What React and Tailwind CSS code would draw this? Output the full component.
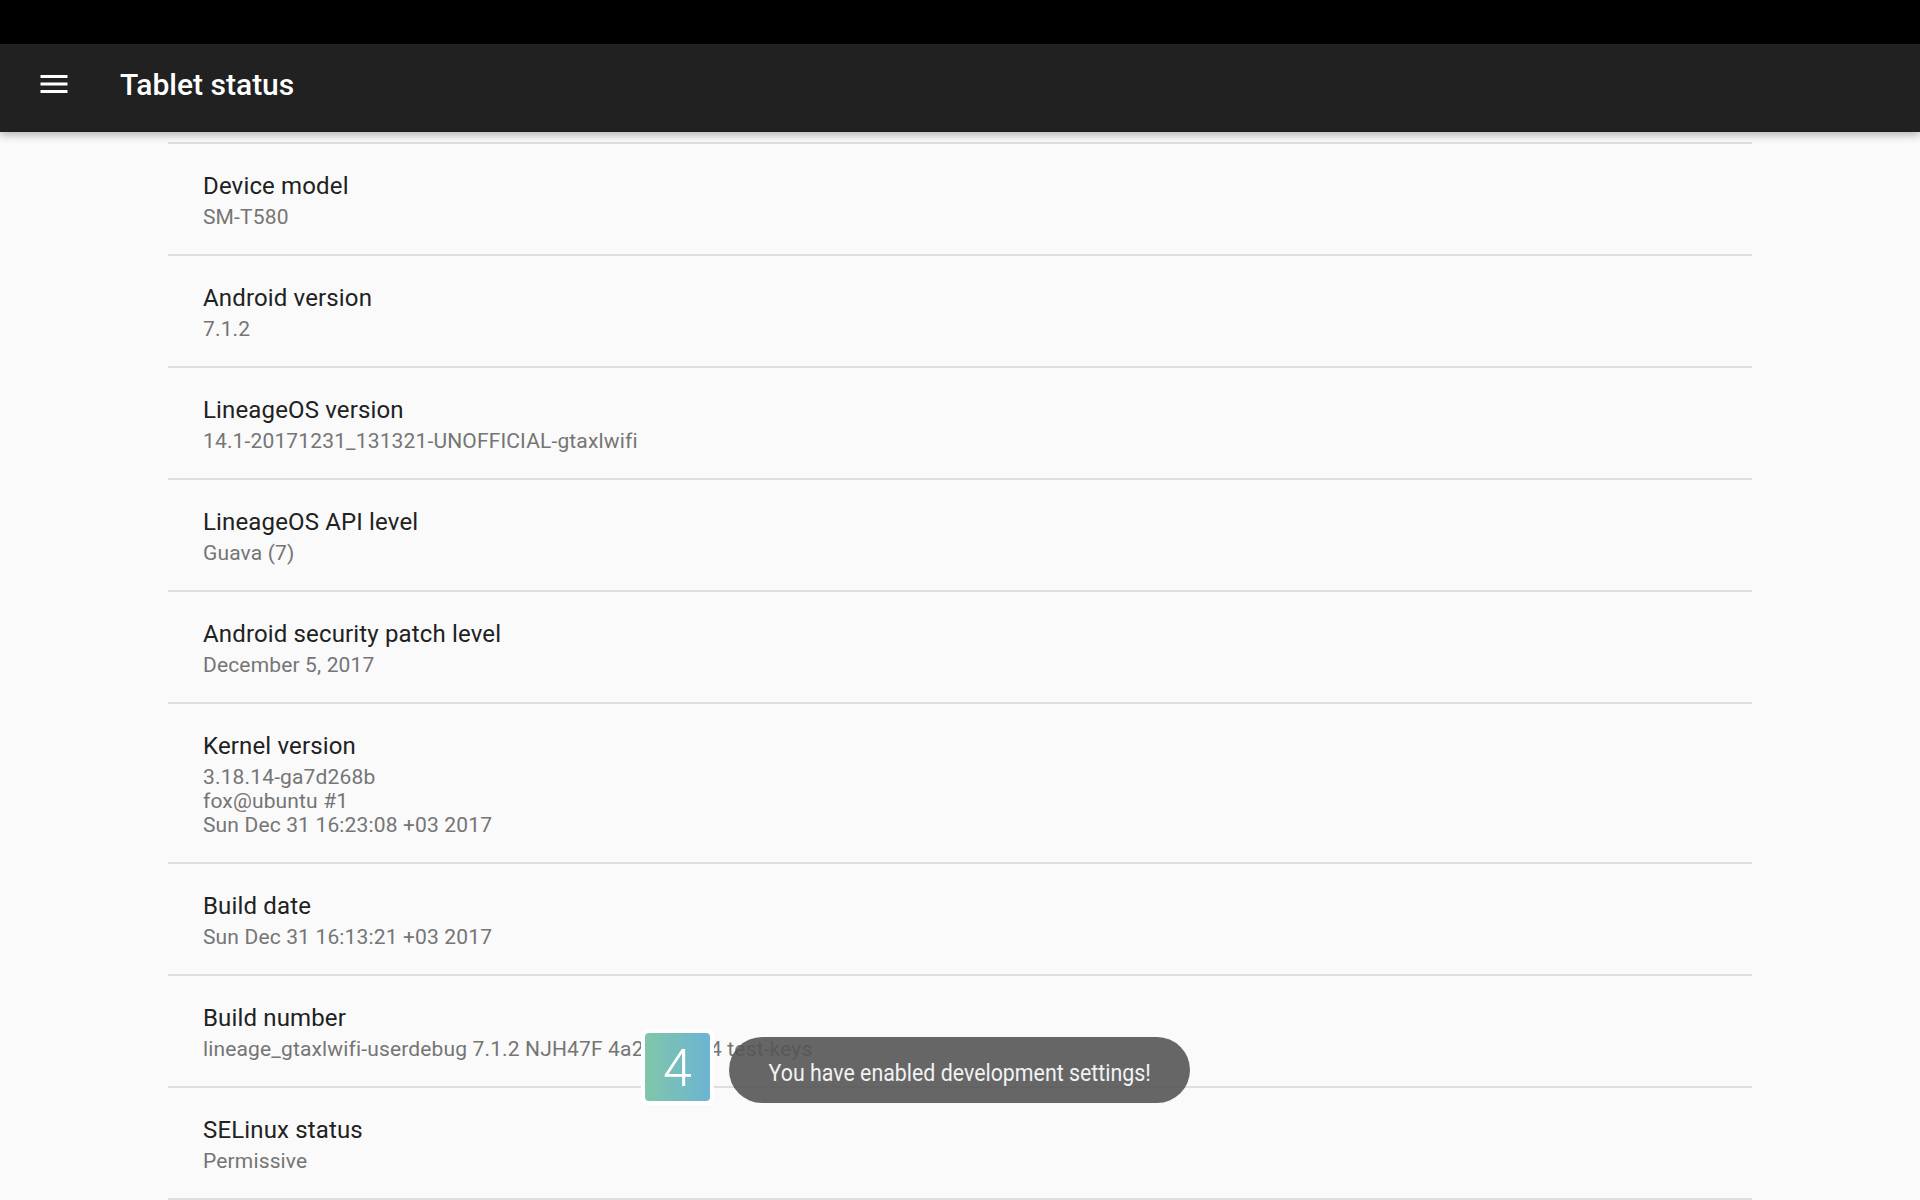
const rows = [
  { title: "Device model", lines: ["SM-T580"] },
  { title: "Android version", lines: ["7.1.2"] },
  { title: "LineageOS version", lines: ["14.1-20171231_131321-UNOFFICIAL-gtaxlwifi"] },
  { title: "LineageOS API level", lines: ["Guava (7)"] },
  { title: "Android security patch level", lines: ["December 5, 2017"] },
  {
    title: "Kernel version",
    lines: ["3.18.14-ga7d268b", "fox@ubuntu #1", "Sun Dec 31 16:23:08 +03 2017"],
  },
  { title: "Build date", lines: ["Sun Dec 31 16:13:21 +03 2017"] },
  {
    title: "Build number",
    lines: ["lineage_gtaxlwifi-userdebug 7.1.2 NJH47F 4a21f0c8d4 test-keys"],
  },
  { title: "SELinux status", lines: ["Permissive"] },
];

const MenuIcon = () => (
  <svg width="36" height="36" viewBox="0 0 24 24" fill="#ffffff">
    <path d="M3 18h18v-2H3v2zm0-5h18v-2H3v2zm0-7v2h18V6H3z" />
  </svg>
);

const Row = ({ title, lines }) => (
  <div className="border-t-2 border-[#dedede]">
    <div className="pl-[35px] pt-[26px] pb-[25px] tracking-[0.15px]">
      <div className="text-[24px] leading-[32px] text-[#212121]">{title}</div>
      <div className="mt-[3px] text-[21px] leading-[24px] text-[#757575]">
        {lines.map((l) => (
          <div key={l} className="whitespace-nowrap">
            {l}
          </div>
        ))}
      </div>
    </div>
  </div>
);

export default function App() {
  return (
    <div
      className="relative w-[1920px] h-[1200px] overflow-hidden bg-[#fafafa]"
      style={{ fontFamily: "Roboto, 'Noto Sans', sans-serif" }}
    >
      {/* status bar */}
      <div className="h-[44px] bg-black"></div>

      {/* toolbar */}
      <div className="relative z-10 h-[88px] bg-[#212121] shadow-[0_3px_8px_rgba(0,0,0,0.28)] flex items-start">
        <div className="ml-[36px] mt-[22px]">
          <MenuIcon />
        </div>
        <div className="ml-[48px] mt-[21px] text-[30px] leading-[40px] font-medium text-white">
          Tablet status
        </div>
      </div>

      {/* list */}
      <div className="mx-[168px] pt-[10px]">
        {rows.map((r) => (
          <Row key={r.title} {...r} />
        ))}
        <div className="border-t-2 border-[#dedede]"></div>
      </div>

      {/* tap counter tile */}
      <div className="absolute left-[641px] top-[1029px] p-[4px] bg-white rounded-[6px]">
        <div className="w-[65px] h-[68px] pt-[3px] rounded-[4px] bg-gradient-to-r from-[#80c6a9] to-[#6cb4d2] flex items-center justify-center text-white text-[52px] font-light leading-none">
          4
        </div>
      </div>

      {/* toast (translucent, text below shows through) */}
      <div className="absolute left-[729px] top-[1037px] w-[461px] h-[66px] pt-[6px] rounded-full bg-[#555555]/90 flex items-center justify-center">
        <span className="inline-block scale-x-[0.89] text-[24px] text-[#f2f2f2] whitespace-nowrap">
          You have enabled development settings!
        </span>
      </div>
    </div>
  );
}
